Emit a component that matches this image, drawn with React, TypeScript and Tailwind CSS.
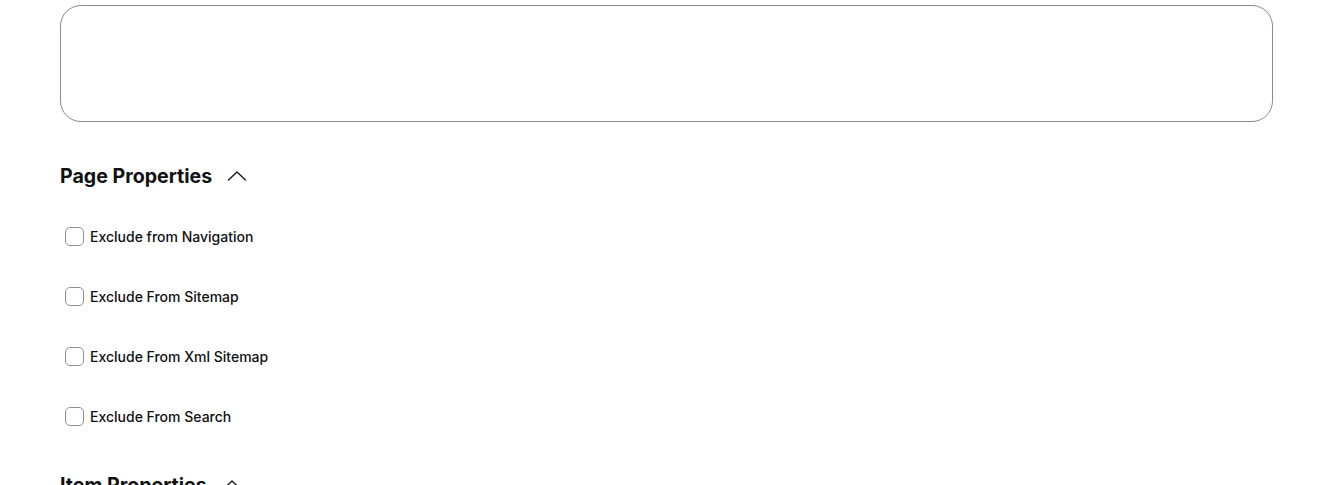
import React from 'react';

const pageProps = [
  'Exclude from Navigation',
  'Exclude From Sitemap',
  'Exclude From Xml Sitemap',
  'Exclude From Search',
];

const ChevronUp: React.FC = () => (
  <svg width="20" height="12" viewBox="0 0 20 12" fill="none" className="ml-[15px]">
    <path d="M1.5 10 L10 2 L18.5 10" stroke="#1a1a1a" strokeWidth="1.4" strokeLinecap="round" strokeLinejoin="round" />
  </svg>
);

const Checkbox: React.FC<{ label: string }> = ({ label }) => (
  <label className="flex h-[20px] items-center">
    <span className="ml-[5px] box-border h-[19px] w-[19px] rounded-[5px] border border-[#8f8f8f] bg-white" />
    <span className="ml-[6px] text-[14px] font-medium text-[#111111]">{label}</span>
  </label>
);

const SectionHeader: React.FC<{ title: string }> = ({ title }) => (
  <div className="flex h-[28px] items-center">
    <h2 className="text-[19.6px] font-bold leading-[28px] text-[#111111]">{title}</h2>
    <ChevronUp />
  </div>
);

export default function App() {
  return (
    <div className="min-h-screen bg-white px-[60px] pt-[5px] font-['Inter','Liberation_Sans',sans-serif]">
      {/* textarea */}
      <div className="h-[117px] w-[1213px] rounded-[21px] border border-[#8c8c8c]" />

      {/* Page Properties */}
      <div className="mt-[40px]">
        <SectionHeader title="Page Properties" />
        <div className="mt-[36px] flex flex-col gap-[40px]">
          {pageProps.map((p) => (
            <Checkbox key={p} label={p} />
          ))}
        </div>
      </div>

      {/* Item Properties */}
      <div className="mt-[45px]">
        <SectionHeader title="Item Properties" />
      </div>
    </div>
  );
}
